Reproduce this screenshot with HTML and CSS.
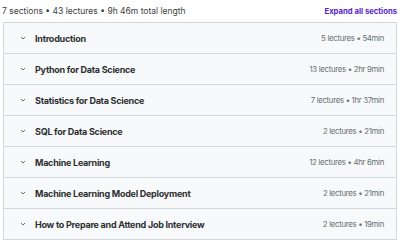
FILE: index.html
```html
<!DOCTYPE html>
<html lang="en">
<head>
    <meta charset="UTF-8">
    <title>Course content</title>
    <link rel="stylesheet" href="styles.css">
</head>
<body>
    <div class="header">
        <span class="summary">7 sections • 43 lectures • 9h 46m total length</span>
        <button class="expand">Expand all sections</button>
    </div>
    <div class="sections">
        <div class="section">
            <svg class="chev" viewBox="0 0 10 10"><path d="M3 4 L5 6 L7 4" /></svg>
            <span class="title">Introduction</span>
            <span class="meta">5 lectures • 54min</span>
        </div>
        <div class="section">
            <svg class="chev" viewBox="0 0 10 10"><path d="M3 4 L5 6 L7 4" /></svg>
            <span class="title">Python for Data Science</span>
            <span class="meta">13 lectures • 2hr 9min</span>
        </div>
        <div class="section">
            <svg class="chev" viewBox="0 0 10 10"><path d="M3 4 L5 6 L7 4" /></svg>
            <span class="title">Statistics for Data Science</span>
            <span class="meta">7 lectures • 1hr 37min</span>
        </div>
        <div class="section">
            <svg class="chev" viewBox="0 0 10 10"><path d="M3 4 L5 6 L7 4" /></svg>
            <span class="title">SQL for Data Science</span>
            <span class="meta">2 lectures • 21min</span>
        </div>
        <div class="section">
            <svg class="chev" viewBox="0 0 10 10"><path d="M3 4 L5 6 L7 4" /></svg>
            <span class="title">Machine Learning</span>
            <span class="meta">12 lectures • 4hr 6min</span>
        </div>
        <div class="section">
            <svg class="chev" viewBox="0 0 10 10"><path d="M3 4 L5 6 L7 4" /></svg>
            <span class="title">Machine Learning Model Deployment</span>
            <span class="meta">2 lectures • 21min</span>
        </div>
        <div class="section">
            <svg class="chev" viewBox="0 0 10 10"><path d="M3 4 L5 6 L7 4" /></svg>
            <span class="title">How to Prepare and Attend Job Interview</span>
            <span class="meta">2 lectures • 19min</span>
        </div>
    </div>
</body>
</html>
```

FILE: styles.css
```css
body {
    margin: 0;
    padding: 3px 3px 0 2px;
    font-family: Inter, "Liberation Sans", sans-serif;
    color: #2d2f31;
    background: #fff;
}
.header {
    display: flex;
    justify-content: space-between;
    align-items: center;
    height: 16px;
    margin-bottom: 3px;
}
.summary {
    font-size: 8.5px;
    color: #3e4143;
}
.expand {
    background: none;
    border: none;
    padding: 0;
    font-family: inherit;
    font-size: 7.7px;
    font-weight: 700;
    color: #5624d0;
    cursor: pointer;
}
.sections {
    margin-left: 1px;
    border: 1px solid #d1d7dc;
}
.section {
    display: flex;
    align-items: center;
    height: 30px;
    padding: 0 12px 0 14px;
    background: #f7f9fa;
    border-top: 1px solid #d1d7dc;
}
.section:first-child {
    border-top: none;
}
.chev {
    width: 10px;
    height: 10px;
    margin-right: 7px;
    fill: none;
    stroke: #6a6f73;
    stroke-width: 1;
}
.title {
    flex: 1;
    font-size: 9px;
    font-weight: 700;
    letter-spacing: -0.25px;
}
.meta {
    font-size: 7.8px;
    letter-spacing: -0.3px;
    color: #6a6f73;
}
```
